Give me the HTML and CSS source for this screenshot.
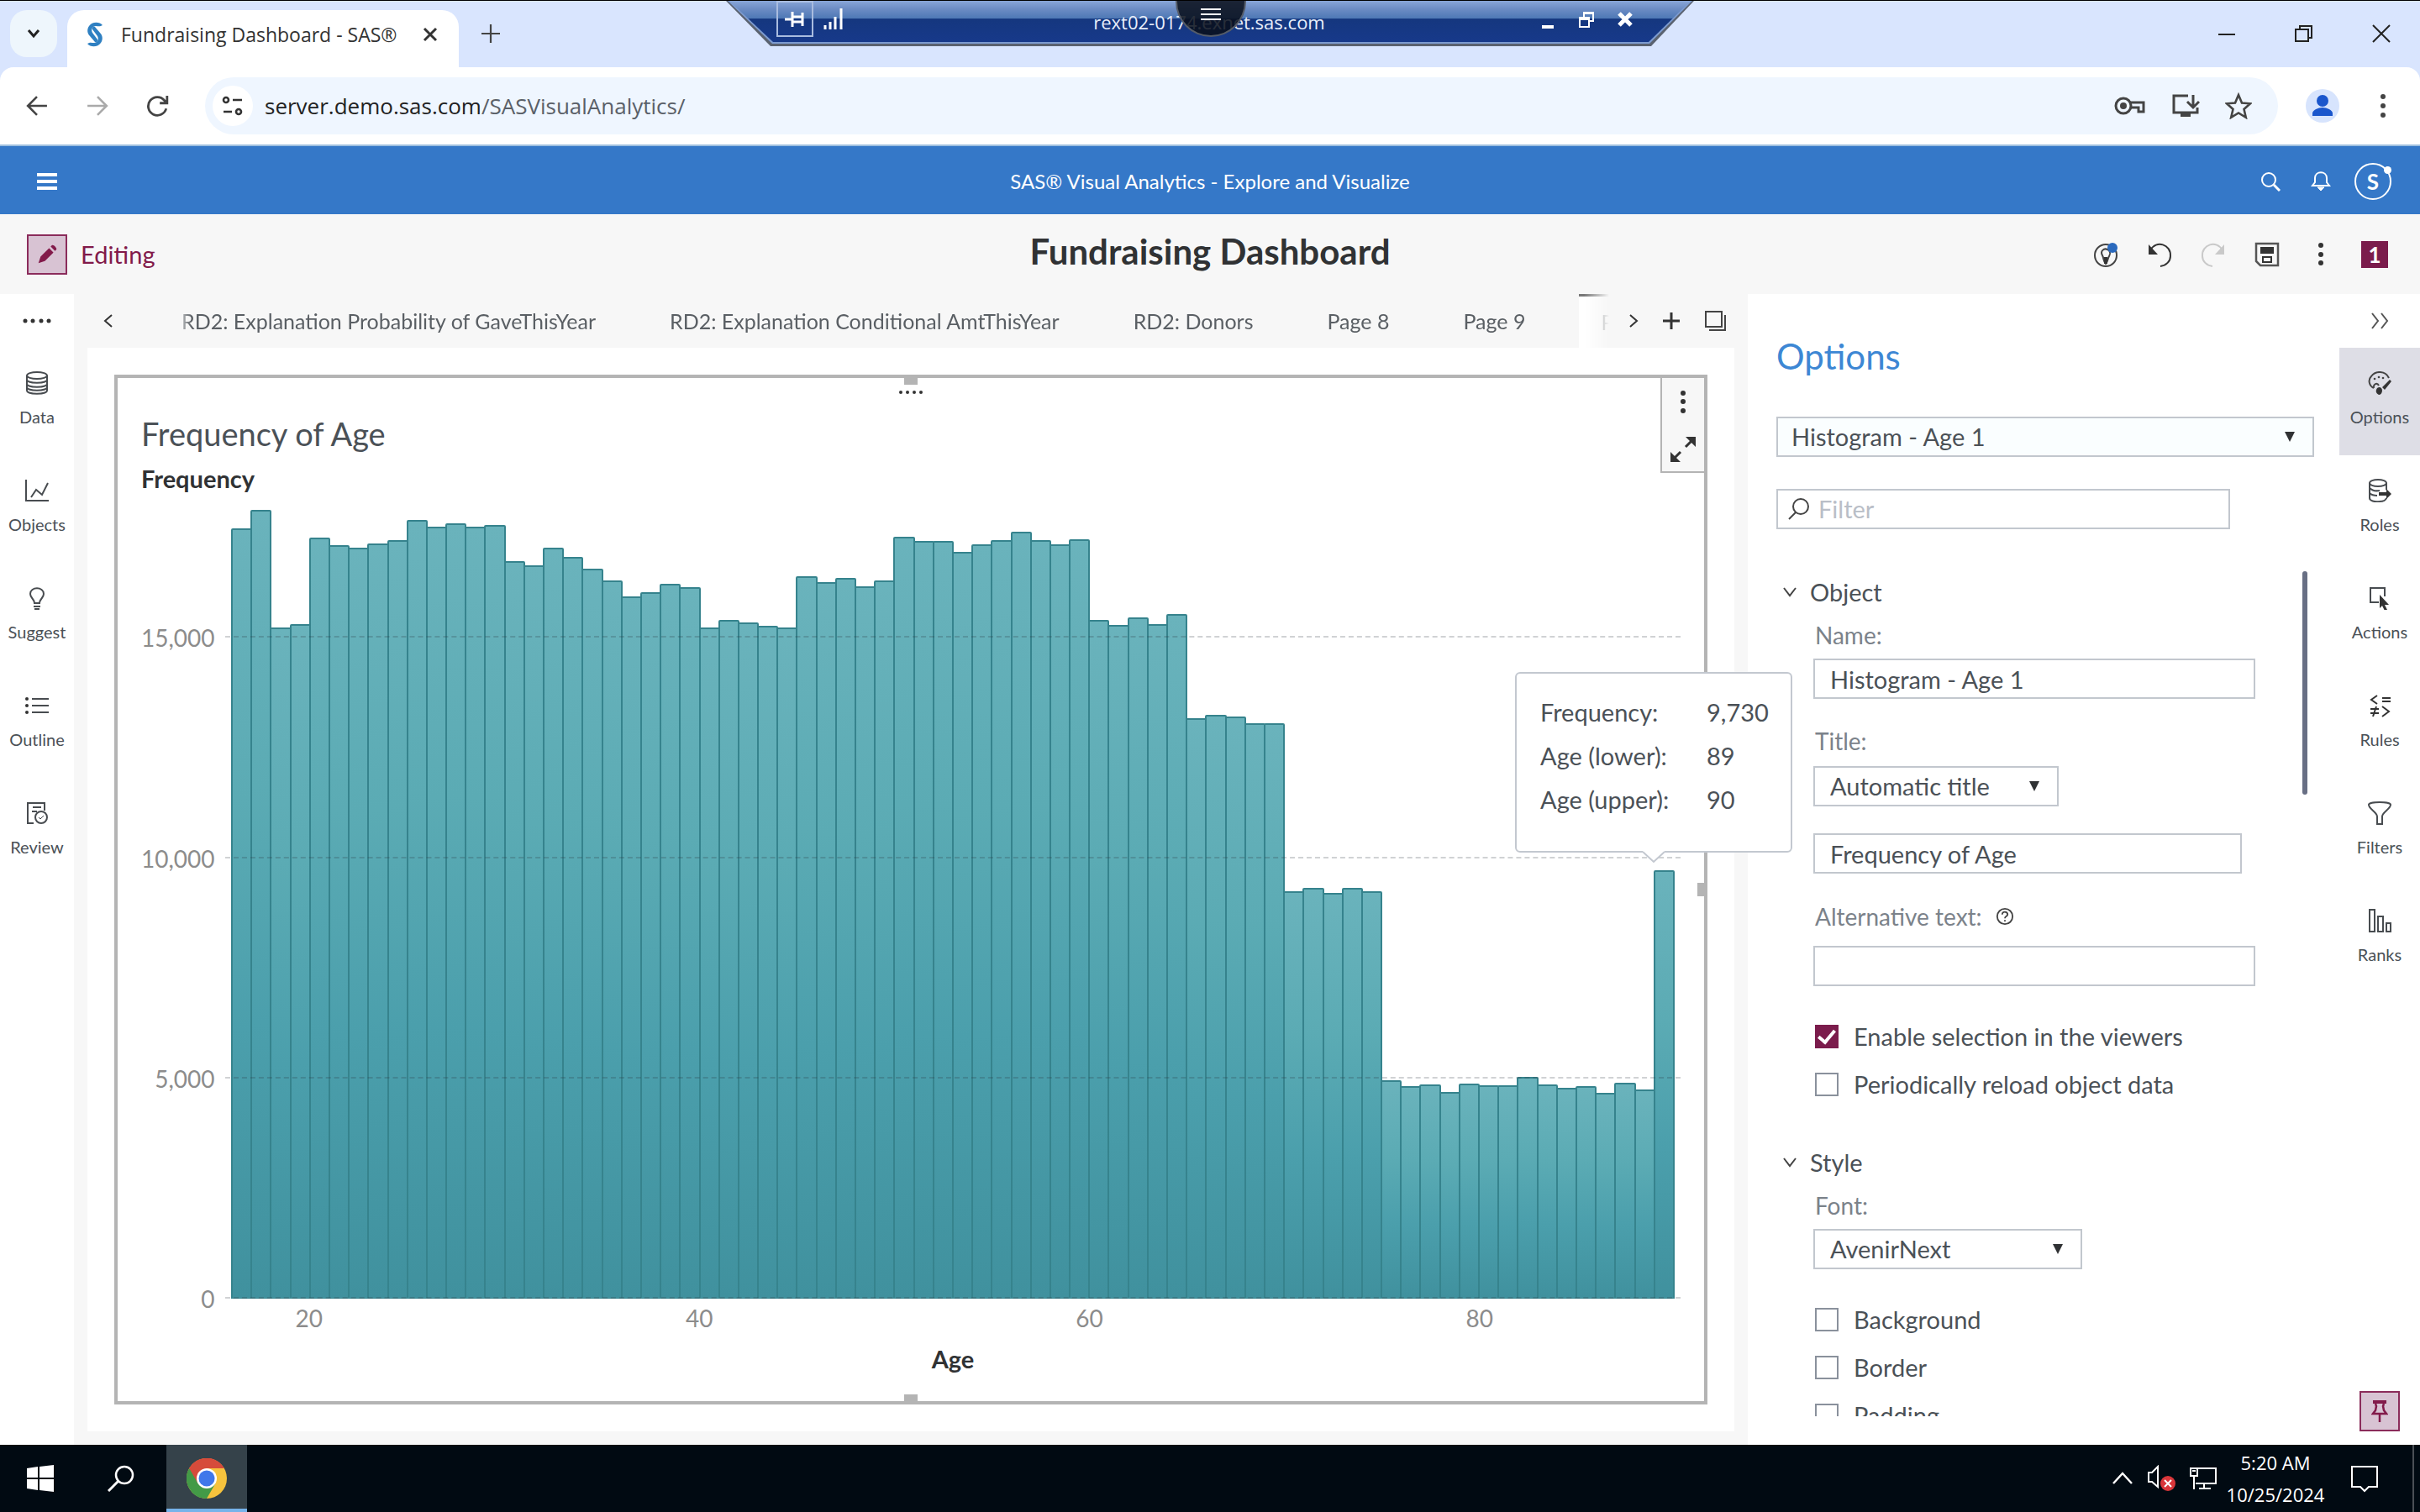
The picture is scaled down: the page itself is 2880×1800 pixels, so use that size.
FILE: index.html
```html
<!DOCTYPE html>
<html lang="en">
<head>
<meta charset="utf-8">
<title>Fundraising Dashboard - SAS®</title>
<link rel="stylesheet" href="styles.css">
</head>
<body>
<header class="browser">
  <div class="tabstrip">
    <button class="tab-search" aria-label="Search tabs"><svg viewBox="0 0 20 20" width="20" height="20"><path d="M4 6l6 7 6-7" fill="none" stroke="#222" stroke-width="3"/></svg></button>
    <div class="browser-tab">
      <svg class="favicon" viewBox="0 0 26 32" width="26" height="32"><path d="M22 5C18 0 9 1 6 6c-3 4-2 9 1 12l6 7c2 1 4-1 3-3l-6-8c-2-4 0-8 4-8 3 0 5 1 8-1z" fill="#2f80c2"/><path d="M4 27c4 5 13 4 16-1 3-4 2-9-1-12l-6-7c-2-1-4 1-3 3l6 8c2 4 0 8-4 8-3 0-5-1-8 1z" fill="#2f80c2"/></svg>
      <span class="browser-tab-title">Fundraising Dashboard - SAS®</span>
      <button class="plain" aria-label="Close tab"><svg viewBox="0 0 20 20" width="20" height="20"><path d="M3 3l14 14M17 3L3 17" stroke="#333" stroke-width="3"/></svg></button>
    </div>
    <button class="plain new-tab" aria-label="New tab"><svg viewBox="0 0 20 20" width="22" height="22"><path d="M10 0v20M0 10h20" stroke="#444" stroke-width="2"/></svg></button>
    <div class="window-buttons">
      <button class="plain" aria-label="Minimize"><svg viewBox="0 0 24 24" width="24" height="24"><path d="M2 13h20" stroke="#222" stroke-width="2"/></svg></button>
      <button class="plain" aria-label="Restore"><svg viewBox="0 0 24 24" width="24" height="24"><path d="M2 7h15v14H2zM7 7V3h14v14h-4" fill="none" stroke="#222" stroke-width="2"/></svg></button>
      <button class="plain" aria-label="Close"><svg viewBox="0 0 24 24" width="24" height="24"><path d="M2 2l20 20M22 2L2 22" stroke="#222" stroke-width="2"/></svg></button>
    </div>
    <div class="remote-bar">
      <svg class="remote-shape" viewBox="0 0 1152 54" preserveAspectRatio="none"><defs><linearGradient id="rb" x1="0" y1="0" x2="0" y2="1"><stop offset="0" stop-color="#89a6d8"/><stop offset=".2" stop-color="#6c8cc4"/><stop offset=".43" stop-color="#4d78b5"/><stop offset=".44" stop-color="#15377f"/><stop offset="1" stop-color="#17398a"/></linearGradient></defs><path d="M0 0H1152L1101 54H53z" fill="#5a6270"/><path d="M2 0H1150L1099 51H55z" fill="#7d9bd0"/><path d="M4 0H1148L1098 49H56z" fill="url(#rb)"/></svg>
      <span class="remote-pin"><svg viewBox="0 0 24 24" width="24" height="24"><path d="M0 12h9M9 3v18M21 4v16M9 9h12M9 15h12" stroke="#fff" stroke-width="3" fill="none"/></svg></span>
      <svg class="remote-signal" viewBox="0 0 24 26" width="24" height="26"><path d="M2 26v-5M8 26V17M14 26V11M21 26V1" stroke="#fff" stroke-width="3"/></svg>
      <span class="remote-host">rext02-0174.exnet.sas.com</span>
      <div class="remote-buttons">
        <svg viewBox="0 0 20 22" width="20" height="22"><path d="M3 20h14" stroke="#fff" stroke-width="4"/></svg>
        <svg viewBox="0 0 20 22" width="20" height="22"><path d="M2 9h11v11H2zM7 8V3h11v10h-4M2 11h11M7 4h11" fill="none" stroke="#fff" stroke-width="2"/></svg>
        <svg viewBox="0 0 20 22" width="20" height="22"><path d="M3 4l14 14M17 4L3 18" stroke="#fff" stroke-width="5"/></svg>
      </div>
      <button class="remote-menu" aria-label="Session menu"><svg viewBox="0 0 24 16" width="24" height="16"><path d="M0 2h24M0 8h24M0 14h24" stroke="#fff" stroke-width="2"/></svg></button>
    </div>
  </div>
  <div class="toolbar">
    <button class="plain nav" aria-label="Back"><svg viewBox="0 0 24 24" width="26" height="26"><path d="M23 12H2M12 2L2 12l10 10" fill="none" stroke="#444" stroke-width="2.4"/></svg></button>
    <button class="plain nav" aria-label="Forward"><svg viewBox="0 0 24 24" width="26" height="26"><path d="M1 12h21M12 2l10 10-10 10" fill="none" stroke="#aaa" stroke-width="2.4"/></svg></button>
    <button class="plain nav" aria-label="Reload"><svg viewBox="0 0 24 24" width="26" height="26"><path d="M21 15a10 10 0 1 1-2-9l3 3M22 1v8h-8" fill="none" stroke="#444" stroke-width="2.6"/></svg></button>
    <div class="address">
      <span class="site-info"><svg viewBox="0 0 26 24" width="26" height="24"><g fill="none" stroke="#333" stroke-width="2.6"><circle cx="5" cy="5" r="3"/><path d="M13 5h11M2 19h10"/><circle cx="20" cy="19" r="3"/></g></svg></span>
      <span class="url">server.demo.sas.com<span class="url-path">/SASVisualAnalytics/</span></span>
      <svg viewBox="0 0 38 28" width="38" height="28"><g fill="none" stroke="#444" stroke-width="3"><path d="M19 10h16v11h-6v-5H19"/><circle cx="11" cy="14" r="9"/></g><circle cx="11" cy="14" r="4" fill="#444"/></svg>
      <svg viewBox="0 0 34 32" width="34" height="32"><path d="M20 4H3v20h28v-6M26 3v14M19 11l7 7 7-7" fill="none" stroke="#444" stroke-width="3"/><path d="M11 24h12v5H11z" fill="#444"/></svg>
      <svg viewBox="0 0 32 32" width="32" height="32"><path d="M16 3l4 9.500 10 .8-7.500 6.700 2.300 9.800L16 24.500 7.200 29.800l2.300-9.800L2 13.300l10-.8z" fill="none" stroke="#444" stroke-width="2.600"/></svg>
    </div>
    <button class="profile" aria-label="Profile"><svg viewBox="0 0 40 40" width="40" height="40"><circle cx="20" cy="14" r="7" fill="#1a56cc"/><path d="M8 32v-3c0-4 7-7 12-7s12 3 12 7v3z" fill="#1a56cc"/></svg></button>
    <button class="plain nav" aria-label="Browser menu"><svg viewBox="0 0 8 30" width="8" height="30"><g fill="#444"><circle cx="4" cy="4" r="3"/><circle cx="4" cy="15" r="3"/><circle cx="4" cy="26" r="3"/></g></svg></button>
  </div>
</header>

<div class="appbar">
  <button class="plain" aria-label="Applications"><svg viewBox="0 0 24 22" width="24" height="22"><path d="M0 3h24M0 11h24M0 19h24" stroke="#fff" stroke-width="4"/></svg></button>
  <span class="appbar-title">SAS® Visual Analytics - Explore and Visualize</span>
  <div class="appbar-tools">
    <button class="plain" aria-label="Search"><svg viewBox="0 0 24 24" width="24" height="24"><circle cx="10" cy="10" r="8" fill="none" stroke="#fff" stroke-width="2"/><path d="M16 16l7 7" stroke="#fff" stroke-width="3"/></svg></button>
    <button class="plain" aria-label="Notifications"><svg viewBox="0 0 24 24" width="24" height="24"><path d="M2 17h20l-3-4V8c0-9-14-9-14 0v5z" fill="none" stroke="#fff" stroke-width="2"/><path d="M8 19h8l-4 4z" fill="#fff" stroke="#fff"/></svg></button>
    <button class="avatar" aria-label="Account">S</button>
  </div>
</div>

<div class="report-header">
  <div class="mode">
    <button class="edit" aria-label="Toggle editing"><svg viewBox="0 0 28 28" width="24" height="24"><path d="M2 26l3-9 12-12 6 6-12 12zM19 3l2-2c2-1 7 4 6 6l-2 2z" fill="#821a4a"/><path d="M17 4l7 7" stroke="#d8bccf" stroke-width="1.500"/></svg></button>
    <span>Editing</span>
  </div>
  <h1>Fundraising Dashboard</h1>
  <div class="report-tools">
    <button class="plain" aria-label="Insights"><svg viewBox="0 0 32 32" width="32" height="32"><circle cx="16" cy="17" r="13" fill="none" stroke="#444" stroke-width="2"/><path d="M16 27c-3-3-2-6-4-10-3-5 2-9 6-7 5 3 3 6 2 8-2 3-1 6-4 9z" fill="none" stroke="#444" stroke-width="2"/><path d="M14 19h4v8h-4z" fill="#333"/><circle cx="24" cy="8" r="6" fill="#2a69bd"/></svg></button>
    <button class="plain" aria-label="Undo"><svg viewBox="0 0 32 32" width="32" height="32"><path d="M5 11C12-2 30 4 29 18c0 6-5 11-12 12" fill="none" stroke="#333" stroke-width="2"/><path d="M3 4v12h11z" fill="#333"/></svg></button>
    <button class="plain" aria-label="Redo" disabled><svg viewBox="0 0 32 32" width="32" height="32"><path d="M27 11C20-2 2 4 3 18c0 6 5 11 12 12" fill="none" stroke="#c9c9c9" stroke-width="2"/><path d="M29 4v12H18z" fill="#c9c9c9"/></svg></button>
    <button class="plain" aria-label="Save"><svg viewBox="0 0 32 32" width="32" height="32"><path d="M3 3h26v26H8l-5-5z" fill="none" stroke="#555" stroke-width="2.500"/><path d="M8 7h16v8H8z" fill="#333"/><path d="M11 19h10v6H11z" fill="none" stroke="#333" stroke-width="2"/></svg></button>
    <button class="plain" aria-label="More"><svg viewBox="0 0 32 32" width="32" height="32"><g fill="#333"><circle cx="16" cy="5" r="3"/><circle cx="16" cy="16" r="3"/><circle cx="16" cy="26" r="3"/></g></svg></button>
    <button class="count" aria-label="One message">1</button>
  </div>
</div>

<main class="workspace">
  <nav class="rail rail-left">
    <div class="rail-top"><svg viewBox="0 0 34 6" width="34" height="6"><g fill="#333"><circle cx="3" cy="3" r="2.500"/><circle cx="12" cy="3" r="2.500"/><circle cx="22" cy="3" r="2.500"/><circle cx="31" cy="3" r="2.500"/></g></svg></div>
    <button><svg viewBox="0 0 28 28"><g fill="none" stroke="#484c50" stroke-width="2"><ellipse cx="14" cy="5" rx="12" ry="4"/><path d="M2 5v18c0 5 24 5 24 0V5M2 10c0 5 24 5 24 0M2 15c0 5 24 5 24 0M2 19c0 5 24 5 24 0"/></g></svg>Data</button>
    <button><svg viewBox="0 0 28 28"><path d="M1 1v25h27M7 22l6-9 7 6 7-14" fill="none" stroke="#484c50" stroke-width="2"/></svg>Objects</button>
    <button><svg viewBox="0 0 28 28"><path d="M11 20c0-5-5-6-5-11C6 0 22 0 22 9c0 5-5 6-5 11zM10 24h8M11 27h6" fill="none" stroke="#484c50" stroke-width="2"/></svg>Suggest</button>
    <button><svg viewBox="0 0 28 28"><path d="M8 6h20M8 14h20M8 22h20" stroke="#484c50" stroke-width="2"/><g fill="#333"><circle cx="2" cy="6" r="2"/><circle cx="2" cy="14" r="2"/><circle cx="2" cy="22" r="2"/></g></svg>Outline</button>
    <button><svg viewBox="0 0 28 28"><path d="M10 26H3V2h20v9M9 7h10M8 12h6" fill="none" stroke="#484c50" stroke-width="2"/><circle cx="19" cy="19" r="7" fill="none" stroke="#484c50" stroke-width="2"/><path d="M16 19l2 2 4-4" fill="none" stroke="#484c50"/></svg>Review</button>
  </nav>

  <section class="report">
    <div class="pages">
      <button class="plain page-prev" aria-label="Scroll pages back"><svg viewBox="0 0 12 18" width="12" height="18"><path d="M10 2L2 9l8 7" fill="none" stroke="#333" stroke-width="2"/></svg></button>
      <div class="page-tabs">
        <a href="#p5">RD2: Explanation Probability of GaveThisYear</a>
        <a href="#p6">RD2: Explanation Conditional AmtThisYear</a>
        <a href="#p7">RD2: Donors</a>
        <a href="#p8">Page 8</a>
        <a href="#p9">Page 9</a>
        <a class="active" href="#p10">Page 10</a>
      </div>
      <div class="page-tools">
        <button class="plain" aria-label="Scroll pages forward"><svg viewBox="0 0 12 18" width="12" height="18"><path d="M2 2l8 7-8 7" fill="none" stroke="#333" stroke-width="2"/></svg></button>
        <button class="plain" aria-label="Add page"><svg viewBox="0 0 20 20" width="20" height="20"><path d="M10 0v20M0 10h20" stroke="#333" stroke-width="3"/></svg></button>
        <button class="plain" aria-label="Page list"><svg viewBox="0 0 26 26" width="26" height="26"><path d="M2 2h19v18H2zM6 24h19V6" fill="none" stroke="#444" stroke-width="2"/></svg></button>
      </div>
    </div>
    <div class="canvas">
      <article class="chart">
        <span class="nub nub-top"></span><span class="nub nub-bottom"></span><span class="nub nub-right"></span>
        <svg class="grip" viewBox="0 0 30 6" width="30" height="6"><g fill="#333"><circle cx="3" cy="3" r="2"/><circle cx="11" cy="3" r="2"/><circle cx="19" cy="3" r="2"/><circle cx="27" cy="3" r="2"/></g></svg>
        <div class="chart-tools">
          <button class="plain" aria-label="Object menu"><svg viewBox="0 0 30 30" width="30" height="30"><g fill="#333"><circle cx="15" cy="4" r="3"/><circle cx="15" cy="14" r="3"/><circle cx="15" cy="25" r="3"/></g></svg></button>
          <button class="plain" aria-label="Maximize"><svg viewBox="0 0 34 34" width="34" height="34"><path d="M4 30l10-10M20 14l10-10" stroke="#333" stroke-width="3"/><path d="M20 2h12v12zM2 20v12h12z" fill="#333"/></svg></button>
        </div>
        <h2>Frequency of Age</h2>
        <p class="axis-title">Frequency</p>
        <div class="plot">
          <div class="y-labels"><span>15,000</span><span>10,000</span><span>5,000</span><span>0</span></div>
          <div class="plot-area">
            <div class="bars">
              <i style="--v:17487"></i><i style="--v:17900"></i><i style="--v:15236"></i><i style="--v:15313"></i><i style="--v:17270"></i><i style="--v:17105"></i><i style="--v:17048"></i><i style="--v:17150"></i><i style="--v:17220"></i><i style="--v:17684"></i>
              <i style="--v:17531"></i><i style="--v:17601"></i><i style="--v:17518"></i><i style="--v:17570"></i><i style="--v:16743"></i><i style="--v:16654"></i><i style="--v:17054"></i><i style="--v:16845"></i><i style="--v:16572"></i><i style="--v:16311"></i>
              <i style="--v:15936"></i><i style="--v:16038"></i><i style="--v:16235"></i><i style="--v:16152"></i><i style="--v:15243"></i><i style="--v:15415"></i><i style="--v:15351"></i><i style="--v:15281"></i><i style="--v:15237"></i><i style="--v:16400"></i>
              <i style="--v:16273"></i><i style="--v:16356"></i><i style="--v:16177"></i><i style="--v:16300"></i><i style="--v:17297"></i><i style="--v:17195"></i><i style="--v:17195"></i><i style="--v:16953"></i><i style="--v:17119"></i><i style="--v:17220"></i>
              <i style="--v:17417"></i><i style="--v:17227"></i><i style="--v:17119"></i><i style="--v:17240"></i><i style="--v:15399"></i><i style="--v:15296"></i><i style="--v:15467"></i><i style="--v:15316"></i><i style="--v:15542"></i><i style="--v:13178"></i>
              <i style="--v:13247"></i><i style="--v:13206"></i><i style="--v:13063"></i><i style="--v:13063"></i><i style="--v:9249"></i><i style="--v:9330"></i><i style="--v:9208"></i><i style="--v:9330"></i><i style="--v:9249"></i><i style="--v:4960"></i>
              <i style="--v:4817"></i><i style="--v:4871"></i><i style="--v:4690"></i><i style="--v:4880"></i><i style="--v:4853"></i><i style="--v:4853"></i><i style="--v:5033"></i><i style="--v:4871"></i><i style="--v:4788"></i><i style="--v:4825"></i>
              <i style="--v:4673"></i><i style="--v:4907"></i><i style="--v:4754"></i><i style="--v:9730"></i>
            </div>
            <div class="gridlines"><i></i><i></i><i></i><i></i></div>
            <div class="tooltip" role="tooltip">
              <dl><dt>Frequency:</dt><dd>9,730</dd><dt>Age (lower):</dt><dd>89</dd><dt>Age (upper):</dt><dd>90</dd></dl>
              <svg class="tooltip-tip" viewBox="0 0 26 15" width="26" height="15"><path d="M0 0h26v1L13 13 0 1z" fill="#fff"/><path d="M0 1l13 12L26 1" fill="none" stroke="#c3c8d0" stroke-width="2"/></svg>
            </div>
          </div>
          <div class="x-labels"><span>20</span><span>40</span><span>60</span><span>80</span></div>
          <p class="x-title">Age</p>
        </div>
      </article>
    </div>
  </section>

  <aside class="options">
    <h2>Options</h2>
    <div class="select wide"><select aria-label="Object"><option>Histogram - Age 1</option></select></div>
    <div class="filter"><svg viewBox="0 0 26 26" width="26" height="26"><circle cx="15" cy="10" r="9" fill="none" stroke="#444" stroke-width="2"/><path d="M9 17l-8 8" stroke="#444" stroke-width="2"/></svg><input type="search" placeholder="Filter" aria-label="Filter"></div>
    <div class="scroll">
      <section class="group">
        <h3><svg viewBox="0 0 16 12" width="16" height="12"><path d="M1 1l7 9 7-9" fill="none" stroke="#444" stroke-width="2"/></svg>Object</h3>
        <label class="caption" for="name">Name:</label>
        <input class="field" id="name" value="Histogram - Age 1">
        <label class="caption spaced" for="title-mode">Title:</label>
        <div class="select title-mode"><select id="title-mode"><option>Automatic title</option></select></div>
        <input class="field title-text" aria-label="Title text" value="Frequency of Age">
        <label class="caption alt" for="alt">Alternative text: <svg viewBox="0 0 24 24" width="22" height="22"><circle cx="12" cy="12" r="10" fill="none" stroke="#444" stroke-width="2"/><path d="M8.500 9.500c0-5 7-4 7 0 0 2.500-3.500 2-3.500 5M12 16.500v2" fill="none" stroke="#444" stroke-width="2"/></svg></label>
        <input class="field" id="alt">
        <label class="check first"><input type="checkbox" checked>Enable selection in the viewers</label>
        <label class="check"><input type="checkbox">Periodically reload object data</label>
      </section>
      <section class="group style-group">
        <h3><svg viewBox="0 0 16 12" width="16" height="12"><path d="M1 1l7 9 7-9" fill="none" stroke="#444" stroke-width="2"/></svg>Style</h3>
        <label class="caption" for="font">Font:</label>
        <div class="select font"><select id="font"><option>AvenirNext</option></select></div>
        <label class="check first"><input type="checkbox">Background</label>
        <label class="check"><input type="checkbox">Border</label>
        <label class="check"><input type="checkbox">Padding</label>
      </section>
      <span class="thumb"></span>
    </div>
  </aside>

  <nav class="rail rail-right">
    <button class="rail-top" aria-label="Collapse"><svg viewBox="0 0 22 20" width="22" height="20"><path d="M2 1l7 9-7 9M13 1l7 9-7 9" fill="none" stroke="#555" stroke-width="2"/></svg></button>
    <button class="selected"><svg viewBox="0 0 28 28"><path d="M7 20c-1-5 4-7 6-3M7 20c-6-3-7-10-3-14 5-7 17-7 21 2" fill="none" stroke="#444" stroke-width="2"/><path d="M26 10l2 2-8 10-3-3zM10 22c1-4 7-4 7 1 0 3-2 5-4 5-2-1-4-3-3-6z" fill="#333"/><g fill="#444"><circle cx="8" cy="9" r="1.300"/><circle cx="13" cy="7" r="1.300"/><circle cx="18" cy="8" r="1.300"/></g></svg>Options</button>
    <button><svg viewBox="0 0 28 28"><g fill="none" stroke="#484c50" stroke-width="2"><ellipse cx="12" cy="5" rx="10" ry="4"/><path d="M2 5v18c0 3 6 5 12 4M22 5v8M22 23c-1 3-4 4-8 4M2 11c3 3 7 4 12 3M2 17c3 3 6 3 9 3"/></g><path d="M13 16h9v-4l6 6-6 6v-4h-9z" fill="#333"/></svg>Roles</button>
    <button><svg viewBox="0 0 28 28"><path d="M13 19H3V2h17v10" fill="none" stroke="#484c50" stroke-width="2"/><path d="M14 10l11 12h-5l3 6-3 1-3-6-3 3z" fill="#333"/></svg>Actions</button>
    <button><svg viewBox="0 0 28 28"><path d="M11 2L4 7l7 5M17 5h10M17 9h10M3 18h10M3 23h10M10 15L6 27M17 15l8 6-8 6" fill="none" stroke="#333" stroke-width="2"/></svg>Rules</button>
    <button><svg viewBox="0 0 28 28"><path d="M1 4c0-4 26-4 26 0 0 5-10 9-10 14v9h-6v-9C11 13 1 9 1 4z" fill="none" stroke="#484c50" stroke-width="2"/></svg>Filters</button>
    <button><svg viewBox="0 0 28 28"><path d="M2 1h6v26H2zM12 9h6v18h-6zM22 17h5v10h-5z" fill="none" stroke="#484c50" stroke-width="2"/></svg>Ranks</button>
    <button class="pin" aria-label="Pin"><svg viewBox="0 0 20 28" width="20" height="28"><path d="M2 1h16v4H2z" fill="#821a4a"/><path d="M5 5l1 3-1 5-3 4h16l-3-4-1-5 1-3M10 18v9" fill="none" stroke="#821a4a" stroke-width="2.500"/></svg></button>
  </nav>
</main>

<footer class="taskbar">
  <button class="task" aria-label="Start"><svg viewBox="0 0 32 32" width="32" height="32"><path d="M0 4l13-2v13H0zM15 2l17-2v15H15zM0 17h13v13L0 28zM15 17h17v15l-17-2z" fill="#fff"/></svg></button>
  <button class="task" aria-label="Search"><svg viewBox="0 0 32 32" width="32" height="32"><circle cx="20" cy="12" r="10" fill="none" stroke="#fff" stroke-width="2.500"/><path d="M13 19L1 31" stroke="#fff" stroke-width="3"/></svg></button>
  <button class="task running" aria-label="Google Chrome"><svg viewBox="0 0 48 48" width="48" height="48"><circle cx="24" cy="24" r="24" fill="#f6c33d"/><path d="M24 24L3.200 12A24 24 0 0 0 24 48l10.400-18z" fill="#439a47"/><path d="M24 24L3.200 12A24 24 0 0 1 44.800 12H24z" fill="#d64b3b"/><path d="M3.200 12l10.400 18L24 12h20.800A24 24 0 0 0 3.200 12z" fill="#d64b3b"/><circle cx="24" cy="24" r="12" fill="#fff"/><circle cx="24" cy="24" r="9.500" fill="#3f78ea"/></svg></button>
  <div class="tray">
    <svg viewBox="0 0 26 16" width="26" height="16"><path d="M2 14L13 2l11 12" fill="none" stroke="#fff" stroke-width="2.500"/></svg>
    <svg viewBox="0 0 34 32" width="34" height="32"><path d="M2 9h4l7-7v24l-7-6H2z" fill="none" stroke="#fff" stroke-width="2"/><circle cx="25" cy="22" r="9" fill="#d9363a"/><path d="M21 18l8 8M29 18l-8 8" stroke="#fff" stroke-width="2"/></svg>
    <svg viewBox="0 0 34 30" width="34" height="30"><path d="M10 3h22v18H8M18 21v6M12 27h14M2 3h8v9H2zM6 12v16M4 6h4" fill="none" stroke="#fff" stroke-width="2"/></svg>
    <div class="clock"><time>5:20 AM</time><time>10/25/2024</time></div>
    <svg class="notify" viewBox="0 0 34 34" width="34" height="34"><path d="M2 3h30v24H22l-5 5-5-5H2z" fill="none" stroke="#fff" stroke-width="2"/></svg>
    <span class="desktop"></span>
  </div>
</footer>
</body>
</html>
```

FILE: styles.css
```css
* { box-sizing: border-box; }

body {
  margin: 0;
  min-height: 100vh;
  display: flex;
  flex-direction: column;
  font: 29px/36px Lato, sans-serif;
  color: #4b5157;
  background: #f7f7f7;
}

h1, h2, h3, p, dl, dd { margin: 0; font-weight: 400; }
button, input, select { font: inherit; color: inherit; }
button { border: 0; padding: 0; background: none; }
svg { display: block; flex: none; }
.plain { display: flex; align-items: center; justify-content: center; }

/* Browser window */
.browser { font-family: "Open Sans", sans-serif; background: #d9e5fe; border-top: 1px solid #000; }
.tabstrip { position: relative; height: 79px; display: flex; padding: 11px 32px 0 12px; }
.tab-search { width: 56px; height: 56px; border-radius: 20px; background: #eef6fc; display: grid; place-items: center; }
.browser-tab {
  display: flex; align-items: center; gap: 18px;
  width: 466px; height: 68px; margin-left: 12px; padding: 0 24px 10px 20px;
  background: #fff; border-radius: 20px 20px 0 0;
}
.browser-tab-title { flex: 1; font-size: 23px; line-height: 32px; color: #333; white-space: nowrap; }
.new-tab { width: 76px; height: 56px; }
.window-buttons { margin-left: auto; display: flex; gap: 68px; height: 56px; padding-right: 2px; }

.remote-bar { position: absolute; top: 0; left: 50%; width: 40%; height: 54px; margin-left: -20%; display: flex; padding: 0 72px 0 60px; }
.remote-shape { position: absolute; inset: 0; width: 100%; height: 54px; }
.remote-pin { position: relative; width: 44px; height: 43px; border: 2px solid #a9bcdf; display: grid; place-items: center; }
.remote-signal { position: relative; margin: 8px 0 0 12px; }
.remote-host { position: relative; flex: 1; text-align: center; font-size: 22px; line-height: 50px; color: #e8eefa; padding-left: 42px; }
.remote-buttons { position: relative; display: flex; gap: 26px; padding-top: 11px; }
.remote-menu {
  position: absolute; left: 50%; top: 0; width: 84px; height: 43px; margin-left: -41px;
  border: 2px solid #555c68; border-top: 0; border-radius: 0 0 42px 42px;
  background: rgba(8, 14, 26, .86); display: flex; justify-content: center; padding-top: 8px;
}

.toolbar { height: 92px; display: flex; align-items: center; padding: 0 28px; background: #fff; border-radius: 16px 16px 0 0; }
.nav { width: 32px; height: 32px; margin-right: 40px; }
.nav:last-child { margin: 0 0 0 36px; }
.address { flex: 1; display: flex; align-items: center; gap: 30px; height: 68px; padding: 0 31px 0 9px; border-radius: 34px; background: #eff6ff; }
.site-info { width: 48px; height: 48px; border-radius: 50%; background: #fff; display: grid; place-items: center; }
.url { flex: 1; margin-left: -16px; font-size: 26px; line-height: 36px; color: #222; }
.url-path { color: #5a6068; }
.profile { width: 40px; height: 40px; border-radius: 50%; background: #d7e4fd; margin-left: 33px; }

/* Application bar */
.appbar { height: 83px; display: grid; grid-template-columns: 1fr auto 1fr; align-items: center; padding: 2px 34px 0; background: #3578c8; color: #fff; border-top: 2px solid #9dbfdf; }
.appbar > button { justify-self: start; margin-left: 10px; }
.appbar-title { font-size: 24px; line-height: 32px; }
.appbar-tools { display: flex; align-items: center; justify-content: flex-end; gap: 36px; }
.avatar { position: relative; width: 44px; height: 44px; margin-left: -8px; border: 2px solid #fff; border-radius: 50%; font-size: 26px; line-height: 36px; font-weight: 700; color: #fff; }
.avatar::after { content: ""; position: absolute; right: -2px; top: 2px; width: 9px; height: 9px; border-radius: 50%; background: #fff; }

/* Report header */
.report-header { height: 95px; display: grid; grid-template-columns: 1fr auto 1fr; align-items: center; padding: 0 38px; }
.mode { display: flex; align-items: center; gap: 16px; margin-left: -6px; color: #821a4a; }
.edit, .pin { width: 48px; height: 48px; border: 2px solid #8b2c5b; background: #d8c3d3; display: grid; place-items: center; }
.report-header h1 { font-size: 42px; line-height: 48px; font-weight: 700; color: #303234; padding-bottom: 8px; }
.report-tools { display: flex; align-items: center; justify-content: flex-end; gap: 32px; }
.count { width: 32px; height: 32px; background: #7b1c4c; color: #fff; font-size: 26px; line-height: 32px; font-weight: 700; }

/* Workspace */
.workspace { flex: 1; display: grid; grid-template-columns: 88px minmax(0, 1fr) 704px 96px; grid-template-rows: minmax(0, 1fr); }
.rail { background: #fff; display: flex; flex-direction: column; align-items: stretch; }
.rail button { height: 128px; padding-top: 28px; display: flex; flex-direction: column; align-items: center; gap: 12px; font-size: 20px; line-height: 28px; }
.rail button svg { width: 28px; height: 28px; }
.rail .rail-top { height: 64px; padding: 0; display: flex; align-items: center; justify-content: center; }
.rail .rail-top svg { width: auto; height: auto; }
.rail .selected { background: #dedee6; }
.rail .pin { width: 48px; height: 48px; margin: auto auto 16px; padding: 0; display: grid; }
.rail .pin svg { width: 20px; }

.report { padding: 0 16px 16px; display: flex; flex-direction: column; min-width: 0; }
.pages { height: 64px; display: flex; align-items: center; font-size: 25px; line-height: 36px; }
.page-prev { width: 50px; height: 36px; margin-right: 54px; }
.page-tabs { flex: 1; min-width: 0; display: flex; align-items: center; align-self: stretch; gap: 88px; padding-left: 8px; overflow: hidden; -webkit-mask-image: linear-gradient(to right, transparent 0, #000 20px, #000 calc(100% - 30px), transparent 100%); }
.page-tabs a { flex: none; color: #5a5f64; text-decoration: none; }
.page-tabs .active { align-self: stretch; line-height: 60px; padding: 0 26px; margin-left: -24px; background: #fff; border-top: 3px solid #777; }
.page-tools { display: flex; align-items: center; gap: 29px; padding: 0 10px 0 23px; }
.canvas { flex: 1; padding: 32px; background: #fff; display: flex; }

/* Chart */
.chart { position: relative; flex: 1; min-width: 0; display: flex; flex-direction: column; border: 4px solid #b4b4b4; padding: 44px 35px 32px 28px; background: #fff; }
.nub { position: absolute; width: 16px; height: 8px; background: #b4b4b4; }
.nub-top { top: 0; left: 50%; margin-left: -8px; }
.nub-bottom { bottom: 0; left: 50%; margin-left: -8px; }
.nub-right { right: 0; top: 50%; width: 8px; height: 16px; margin-top: -8px; }
.grip { position: absolute; top: 14px; left: 50%; margin-left: -15px; }
.chart-tools { position: absolute; top: 0; right: 0; width: 52px; height: 113px; border: solid #b4b4b4; border-width: 0 0 2px 2px; background: #f7f7f7; display: flex; flex-direction: column; align-items: center; padding-top: 14px; gap: 24px; }
.chart h2 { font-size: 38px; line-height: 44px; }
.axis-title, .x-title { font-size: 29px; line-height: 32px; font-weight: 700; color: #303234; }
.axis-title { margin: 16px 0; }
.plot { flex: 1; display: grid; grid-template-columns: 87px minmax(0, 1fr); grid-template-rows: minmax(0, 1fr) 40px 50px; column-gap: 20px; }
.y-labels, .gridlines { display: grid; grid-template-rows: 3fr 5fr 5fr 5fr; }
.y-labels { font-size: 28px; line-height: 36px; color: #8c8c8c; text-align: right; }
.y-labels span { align-self: end; margin-bottom: -18px; }
.plot-area { position: relative; display: grid; }
.bars { display: flex; align-items: flex-end; padding-right: 2px; }
.bars i {
  flex: 1; height: calc(var(--v) / 18000 * 100%); margin-right: -2px;
  border: 2px solid #36838d; border-bottom-width: 1px; border-radius: 2px 2px 0 0;
  background: linear-gradient(#6ab3bc, #5babb4 35%, #4b9fac 65%, #40919e);
}
.gridlines { position: absolute; inset: 0 -7px 0; }
.gridlines i { border-bottom: 2px dashed rgba(40, 50, 60, .22); }
.x-labels { grid-column: 2; display: grid; grid-template-columns: 8fr 12fr 8fr 12fr 8fr 12fr 8fr 6fr; padding-top: 6px; font-size: 28px; line-height: 34px; color: #8c8c8c; text-align: center; }
.x-labels span:nth-child(2) { grid-column: 3; }
.x-labels span:nth-child(3) { grid-column: 5; }
.x-labels span:nth-child(4) { grid-column: 7; }
.x-title { grid-column: 2; text-align: center; padding-top: 16px; }

.tooltip { position: absolute; right: -140px; top: 198px; z-index: 2; width: 330px; height: 215px; padding: 20px 26px 0 28px; border: 2px solid #c3c8d0; border-radius: 6px; background: #fff; }
.tooltip dl { display: grid; grid-template-columns: 1fr 74px; line-height: 52px; }
.tooltip-tip { position: absolute; left: 150px; top: 211px; }

/* Options panel */
.options { background: #fff; padding: 50px 30px 34px 34px; display: flex; flex-direction: column; }
.options h2 { font-size: 42px; line-height: 48px; color: #3d87d4; }
.select { position: relative; height: 48px; }
.select::after { content: ""; position: absolute; right: 23px; top: 18px; border: solid transparent; border-width: 12px 6px 0; border-top-color: #303234; }
.select select, .field { width: 100%; height: 48px; padding: 0 18px; border: 2px solid #c2c7ce; border-radius: 0; background: #fff; appearance: none; }
.wide { margin-top: 48px; }
.wide select { padding: 0 16px; background: #fafeff; }
.filter { display: flex; align-items: center; gap: 10px; width: 540px; height: 48px; margin-top: 38px; padding: 0 12px; border: 2px solid #c2c7ce; }
.filter input { flex: 1; border: 0; padding: 0; min-width: 0; background: none; outline: 0; }
.filter input::placeholder { color: #b9bec7; opacity: 1; }
.scroll { position: relative; flex: 1 1 0; min-height: 0; margin-top: 50px; padding-top: 7px; overflow: hidden; }
.thumb { position: absolute; top: 0; right: 8px; width: 6px; height: 266px; border-radius: 3px; background: #686f84; }
.group { padding: 0 70px 0 44px; }
.group h3 { display: flex; align-items: center; gap: 16px; margin-left: -36px; font-size: 29px; line-height: 36px; }
.caption { display: flex; align-items: center; gap: 16px; margin: 15px 0 10px 2px; font-size: 28px; line-height: 36px; color: #7b828a; }
.caption.spaced { margin: 32px 0 12px 2px; }
.caption.alt { margin: 33px 0 17px 2px; }
.title-mode { width: 292px; }
.title-text { width: 510px; margin-top: 32px; }
.font { width: 320px; }
.check { display: flex; align-items: center; gap: 18px; height: 36px; margin: 21px 0 0 2px; }
.check.first { margin-top: 42px; }
.check input { appearance: none; flex: none; width: 28px; height: 28px; margin: 0; border: 2px solid #8a919c; background: #fff; display: grid; place-items: center; }
.check input:checked { background: #7b1c4c; border-color: #7b1c4c; }
.check input:checked::after { content: ""; width: 8px; height: 16px; border: solid #fff; border-width: 0 4px 4px 0; transform: translateY(-2px) rotate(40deg); }
.style-group { padding-top: 57px; }

/* Taskbar */
.taskbar { height: 80px; flex: none; display: flex; background: #010a12; color: #fff; font-family: "Open Sans", sans-serif; }
.task { width: 96px; display: grid; place-items: center; }
.running { margin-left: 6px; background: #35424a; border-bottom: 4px solid #76b3ea; padding-top: 4px; }
.tray { margin-left: auto; display: flex; align-items: center; gap: 16px; }
.clock { display: flex; flex-direction: column; align-items: center; width: 118px; margin-left: -6px; font-size: 22px; line-height: 38px; }
.notify { margin: 0 24px 0 14px; }
.desktop { width: 9px; height: 80px; border-left: 2px solid #4a4f55; }
```
